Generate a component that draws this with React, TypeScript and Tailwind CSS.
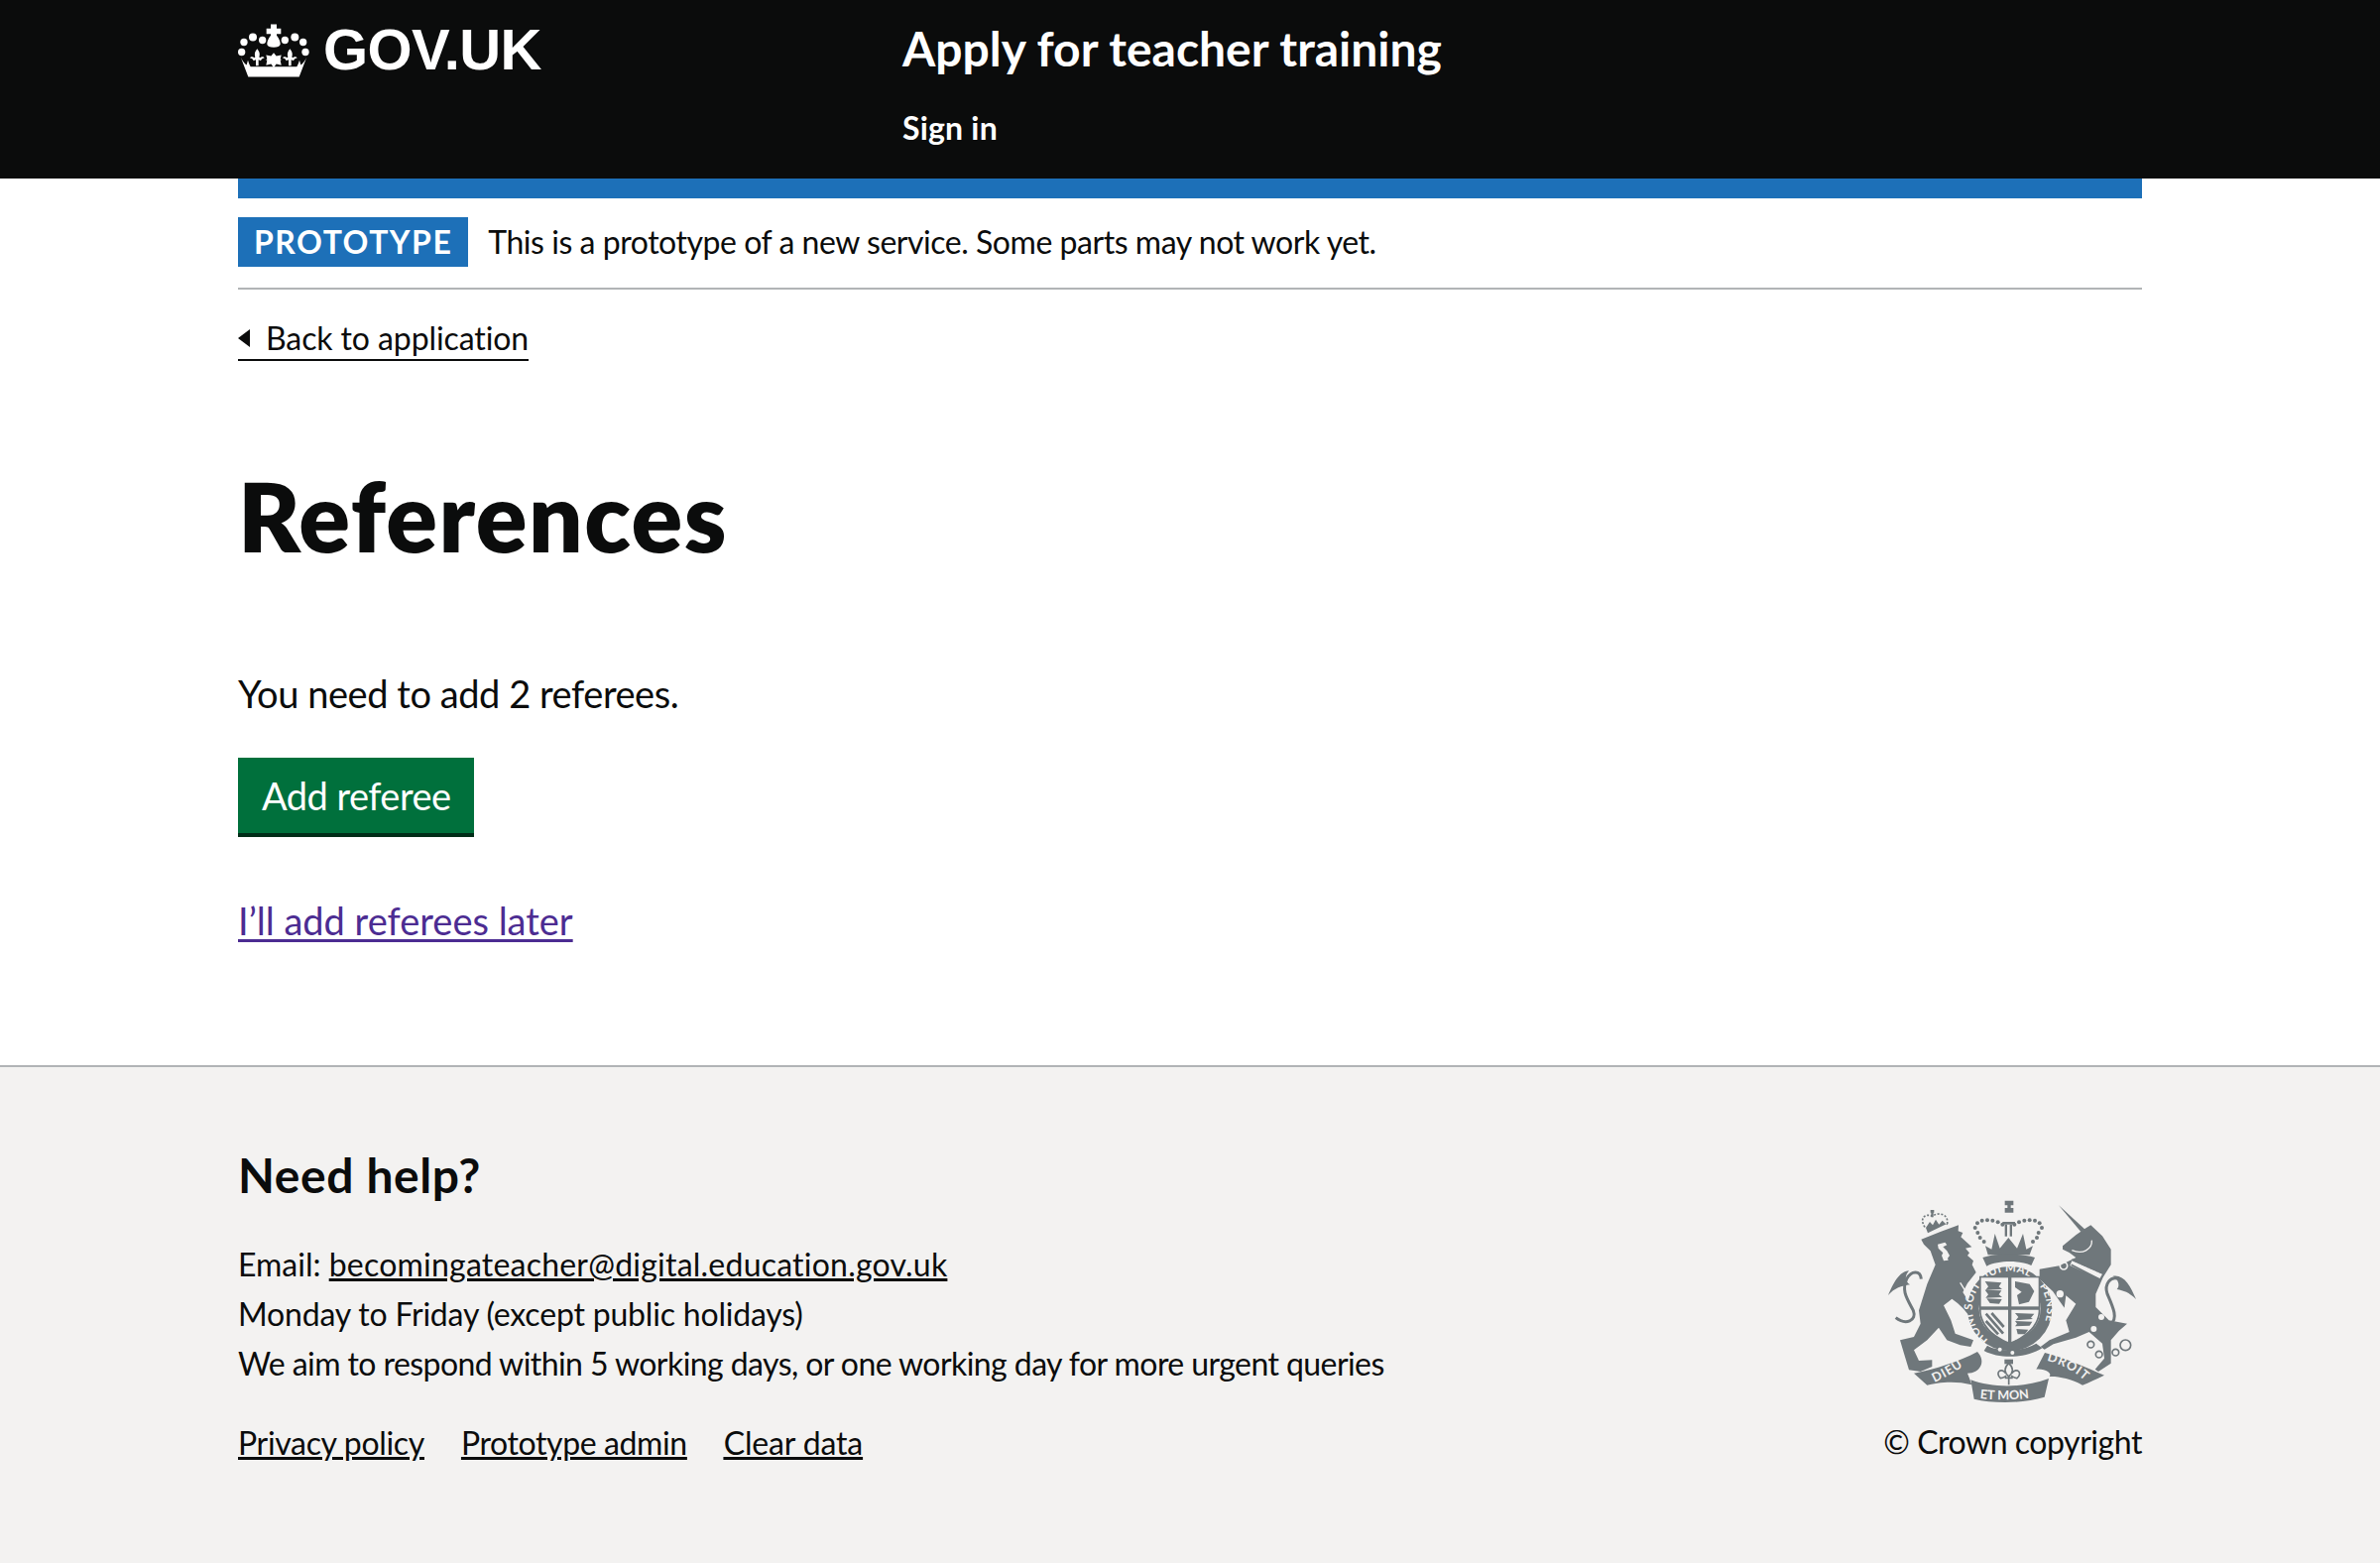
const font = { fontFamily: '"Lato", sans-serif' };

function CrownLogo() {
  return (
    <svg viewBox="60 60 216 164" width="72" height="55" fill="#ffffff" aria-hidden="true">
      <circle cx="78" cy="118" r="11" />
      <circle cx="105" cy="103" r="12" />
      <circle cx="134" cy="112" r="11" />
      <circle cx="202" cy="112" r="11" />
      <circle cx="232" cy="103" r="12" />
      <circle cx="257" cy="118" r="11" />
      <circle cx="71" cy="148" r="11" />
      <circle cx="264" cy="148" r="11" />
      {/* top cross and drop */}
      <path d="M159 64h18v13h13v16h-13v5c7 8 12 20 11 27-1 6-9 9-20 9s-19-3-20-9c-1-7 4-19 11-27v-5h-13V77h13z" />
      {/* middle cross */}
      <path d="M168 150l8 10 15-3-3 12 4 2-4 2 3 15-15-4-8 11-8-11-15 4 3-15-4-2 4-2-3-12 15 3z" />
      {/* fleurs */}
      <path d="M118 138c7 8 9 15 6 25l3 2c4-4 11-3 13 1-5 0-9 3-11 8l-7-3v18h-8v-18l-7 3c-2-5-6-8-11-8 2-4 9-5 13-1l3-2c-3-10-1-17 6-25z" />
      <path d="M217 138c7 8 9 15 6 25l3 2c4-4 11-3 13 1-5 0-9 3-11 8l-7-3v18h-8v-18l-7 3c-2-5-6-8-11-8 2-4 9-5 13-1l3-2c-3-10-1-17 6-25z" />
      {/* base */}
      <path d="M68 163c4 10 12 20 18 24l4-14c2 6 4 13 8 19h140c4-6 6-13 8-19l4 14c6-4 14-14 18-24l-23 60H91z" />
    </svg>
  );
}

function Crest() {
  const grey = "#6f777b";
  const bg = "#f3f2f1";
  const beads = [
    [343, 165], [335, 150], [342, 136], [356, 128], [372, 127], [388, 128], [404, 133], [418, 140],
    [527, 165], [537, 150], [530, 136], [516, 128], [500, 127], [484, 128], [468, 133], [454, 140],
    [350, 180], [522, 180], [362, 192], [510, 192],
  ];
  return (
    <svg viewBox="60 60 780 630" width="260" height="210" aria-hidden="true">
      {/* lion */}
      <path
        fill={grey}
        d="M172 185L230 162L285 142L284 160L298 165L292 178L325 208L306 212L318 226L312 234L330 250L326 262L338 285L312 318L298 345L320 380L345 420L330 432L300 395L282 378L265 365L240 385L262 430L275 470L330 490L322 510L290 505L250 490L225 452L190 490L150 520L165 552L205 550L205 570L170 585L135 580L120 530L108 490L150 480L170 440L165 400L190 320L215 262L200 220L180 200Z"
      />
      <path fill={bg} d="M222 200l22-6 6 8-12 6 12 12 8 14-6 8 2 6-14 2-6-16 4-8-14-14z" />
      <path fill="none" stroke={bg} strokeWidth="4" d="M290 316L345 404" />
      <path fill="none" stroke={grey} strokeWidth="9" d="M95 422C125 445 160 432 148 400C128 362 112 340 128 305C142 278 170 278 172 305" />
      <path fill={grey} d="M135 280C105 282 88 318 72 354C92 332 112 326 138 322C122 312 122 295 135 280Z" />
      {/* lion crown */}
      <path fill="none" stroke={grey} strokeWidth="5" strokeDasharray="6 5" d="M183 148C165 120 185 105 206 115C225 100 258 110 250 140" />
      <path fill={grey} d="M186 150L198 132L207 142L216 125L226 140L236 128L250 142L254 136L192 166Z" />
      <path fill={grey} d="M200 96h11v8h-11zM202 104h7v14h-7z" />
      {/* centre crown */}
      <path fill={grey} d="M425 68h26v14h-8v8h8v14h-26V90h8v-8h-8z" />
      <rect x="425" y="140" width="7" height="36" fill={grey} />
      <rect x="440" y="140" width="7" height="36" fill={grey} />
      <rect x="418" y="132" width="38" height="8" fill={grey} />
      {beads.map(([cx, cy]) => (
        <circle key={`${cx}-${cy}`} cx={cx} cy={cy} r="6" fill={grey} />
      ))}
      <path fill={grey} d="M366 205L385 215L395 168L410 212L436 180L462 212L480 168L490 215L510 205L500 232H374Z" />
      <path fill={grey} d="M358 240C400 226 475 226 516 240L505 264C470 248 405 248 370 266Z" />
      {/* garter */}
      <circle cx="440" cy="395" r="128" fill={grey} />
      <circle cx="440" cy="395" r="93" fill={bg} />
      <defs>
        <path id="garter" d="M375 488A113 113 0 1 1 498 492" />
        <path id="ribbonLeft" d="M212 618C250 600 285 580 318 555" />
        <path id="ribbonMid" d="M350 666C400 672 470 672 526 660" />
        <path id="ribbonRight" d="M552 552C590 560 640 585 672 618" />
      </defs>
      <text fill={bg} fontSize="34" fontFamily="Lato, sans-serif" fontWeight="700">
        <textPath href="#garter" textLength="500">HONI SOIT QUI MAL Y PENSE</textPath>
      </text>
      {/* shield */}
      <path fill={grey} d="M348 296H532V400C532 450 482 490 440 510C398 490 348 450 348 400Z" />
      <path fill={bg} d="M353 301H435V388H353Z" />
      <path fill={bg} d="M445 301H527V388H445Z" />
      <path fill={bg} d="M353 398H435V495C395 478 353 445 353 398Z" />
      <path fill={bg} d="M445 398H527C527 445 485 478 445 495Z" />
      <path fill={grey} d="M365 312l50 4-8 12 10 8-50 2 8-10zM365 338l50 2-8 12 10 8-50 2 8-10zM370 364l46 2-8 14-28-2z" />
      <path fill={grey} d="M456 312l44 8 14 22-16 32-30 8-6-28 14-10-20-14z" />
      <path fill={grey} d="M456 408l58 2-10 12 6 4-52 4 8-10zM456 432l52 2-8 12-44 2 6-8zM460 456l36 2-10 14-22 0z" />
      <path fill="none" stroke={grey} strokeWidth="8" d="M368 410L420 470M385 408L422 450M368 432L405 472" />
      <path fill={grey} d="M372 506C400 525 480 525 520 500L538 514C490 545 410 548 362 522Z" />
      <circle cx="410" cy="518" r="6" fill={bg} />
      <circle cx="448" cy="528" r="6" fill={bg} />
      {/* unicorn */}
      <path fill={grey} d="M588 82L668 155L655 162Z" />
      <path
        fill={grey}
        d="M600 205L640 172L668 152L685 142L720 175L746 215L746 262L722 300L700 350L700 390L740 430L795 440L770 462L746 490L746 560L708 585L698 578L726 545L720 500L680 465L640 482L572 502L545 518L533 510L560 490L620 465L610 430L640 380L610 355L605 392L570 342L530 305L530 275L590 265L640 240L620 225L600 215Z"
      />
      <path fill="none" stroke={bg} strokeWidth="4" d="M628 218C660 232 690 215 688 188" />
      <path fill={bg} d="M628 250L720 290L712 304L622 264Z" />
      <path fill="none" stroke={grey} strokeWidth="5" strokeDasharray="6 4" d="M628 246L722 288" />
      <path fill="none" stroke={grey} strokeWidth="5" d="M626 262L712 306" />
      <path fill="none" stroke={grey} strokeWidth="9" d="M745 440C770 425 750 385 735 350C725 320 745 295 770 305" />
      <path fill={grey} d="M752 296C785 290 805 325 822 366C800 345 785 340 764 336C775 325 768 305 752 296Z" />
      <circle cx="603" cy="265" r="11" fill="none" stroke={bg} strokeWidth="5" />
      <circle cx="592" cy="350" r="11" fill={bg} />
      <circle cx="726" cy="374" r="10" fill={bg} />
      <circle cx="717" cy="420" r="9" fill={bg} />
      <circle cx="694" cy="456" r="9" fill={bg} />
      <circle cx="685" cy="503" r="10" fill="none" stroke={grey} strokeWidth="5" />
      <circle cx="710" cy="533" r="10" fill="none" stroke={grey} strokeWidth="5" />
      <circle cx="760" cy="527" r="10" fill="none" stroke={grey} strokeWidth="5" />
      <circle cx="790" cy="505" r="16" fill="none" stroke={grey} strokeWidth="5" />
      {/* motto ribbon */}
      <path fill={grey} d="M150 590C215 578 285 555 342 525C370 555 350 590 312 590C318 605 322 615 325 625C270 610 215 620 190 626Z" />
      <path fill={grey} d="M322 610C390 635 480 635 558 606L545 662C480 682 390 682 332 668Z" />
      <path fill={grey} d="M520 578L546 528C610 545 670 572 726 596C700 608 680 618 660 626C625 605 580 598 560 600C570 590 545 575 520 578Z" />
      <text fill={bg} fontSize="38" fontFamily="Lato, sans-serif" fontWeight="700" letterSpacing="3">
        <textPath href="#ribbonLeft">DIEU</textPath>
      </text>
      <text fill={bg} fontSize="38" fontFamily="Lato, sans-serif" fontWeight="700">
        <textPath href="#ribbonMid">ET MON</textPath>
      </text>
      <text fill={bg} fontSize="38" fontFamily="Lato, sans-serif" fontWeight="700" letterSpacing="3">
        <textPath href="#ribbonRight">DROIT</textPath>
      </text>
      {/* fleur */}
      <path fill="none" stroke={grey} strokeWidth="5" d="M437 560C420 575 425 590 437 600C449 590 454 575 437 560ZM428 590C412 570 395 590 412 605C420 605 425 600 430 598M446 590C462 570 480 590 462 605C454 605 449 600 444 598M425 604H449M437 604V625" />
      <rect x="424" y="548" width="26" height="14" fill={grey} />
    </svg>
  );
}

export default function App() {
  return (
    <div className="min-h-[1576px] flex flex-col bg-white text-[#0b0c0c]" style={font}>
      <header className="bg-[#0b0c0c] text-white h-[180px]">
        <div className="w-[1920px] mx-auto flex">
          <div className="w-[670px] flex items-center gap-[14px] pt-[12px] h-[76px] box-content">
            <CrownLogo />
            <span className="font-bold text-[58px] leading-none tracking-[-0.6px] font-['Liberation_Sans']">GOV.UK</span>
          </div>
          <div className="pt-[19px]">
            <div className="text-[48px] leading-[60px] font-bold">Apply for teacher training</div>
            <div className="text-[32px] leading-[40px] font-bold mt-[30px] tracking-[0.2px]">Sign in</div>
          </div>
        </div>
      </header>

      <main className="w-[1920px] mx-auto flex-1">
        <div className="h-[20px] bg-[#1d70b8]"></div>
        <div className="flex items-center h-[92px] border-b-2 border-[#b1b4b6] pb-[2px]">
          <strong className="bg-[#1d70b8] text-white text-[32px] leading-[50px] px-[16px] font-bold tracking-[1.5px]">PROTOTYPE</strong>
          <span className="ml-[20px] text-[32px] tracking-[-0.46px]">This is a prototype of a new service. Some parts may not work yet.</span>
        </div>
        <a className="mt-[28px] inline-flex items-center border-b-2 border-[#0b0c0c] text-[32px] leading-[42px] tracking-[-0.1px]">
          <span className="w-0 h-0 border-y-[9px] border-y-transparent border-r-[12px] border-r-[#0b0c0c] mr-[16px]"></span>
          Back to application
        </a>
        <h1 className="text-[96px] leading-[120px] font-extrabold mt-[96px] tracking-[1.5px]">References</h1>
        <p className="text-[38px] leading-[50px] mt-[94px] tracking-[-0.45px]">You need to add 2 referees.</p>
        <button className="block mt-[40px] h-[80px] bg-[#00703c] text-white border-b-4 border-[#002d18] text-[38px] px-[24px] tracking-[-0.55px]">Add referee</button>
        <a className="inline-block mt-[59px] text-[38px] leading-[50px] text-[#4c2c92] underline underline-offset-[4px]">I’ll add referees later</a>
      </main>

      <footer className="bg-[#f3f2f1] border-t-2 border-[#b1b4b6] h-[502px]">
        <div className="w-[1920px] mx-auto flex justify-between pt-[79px]">
          <div>
            <h2 className="text-[48px] leading-[60px] font-bold tracking-[0.6px]">Need help?</h2>
            <div className="mt-[35px] text-[32px] leading-[50px]">
              <div>Email: <a className="underline tracking-[0.22px]">becomingateacher@digital.education.gov.uk</a></div>
              <div className="tracking-[-0.19px]">Monday to Friday (except public holidays)</div>
              <div className="tracking-[-0.57px]">We aim to respond within 5 working days, or one working day for more urgent queries</div>
            </div>
            <div className="mt-[30px] flex gap-[37px] text-[32px] leading-[50px] underline">
              <a className="tracking-[-0.33px]">Privacy policy</a>
              <a className="tracking-[-0.4px]">Prototype admin</a>
              <a className="tracking-[-0.15px]">Clear data</a>
            </div>
          </div>
          <div className="flex flex-col items-end pt-[53px]">
            <Crest />
            <div className="text-[32px] leading-[50px] mt-[11px] tracking-[-0.45px]">© Crown copyright</div>
          </div>
        </div>
      </footer>
    </div>
  );
}
